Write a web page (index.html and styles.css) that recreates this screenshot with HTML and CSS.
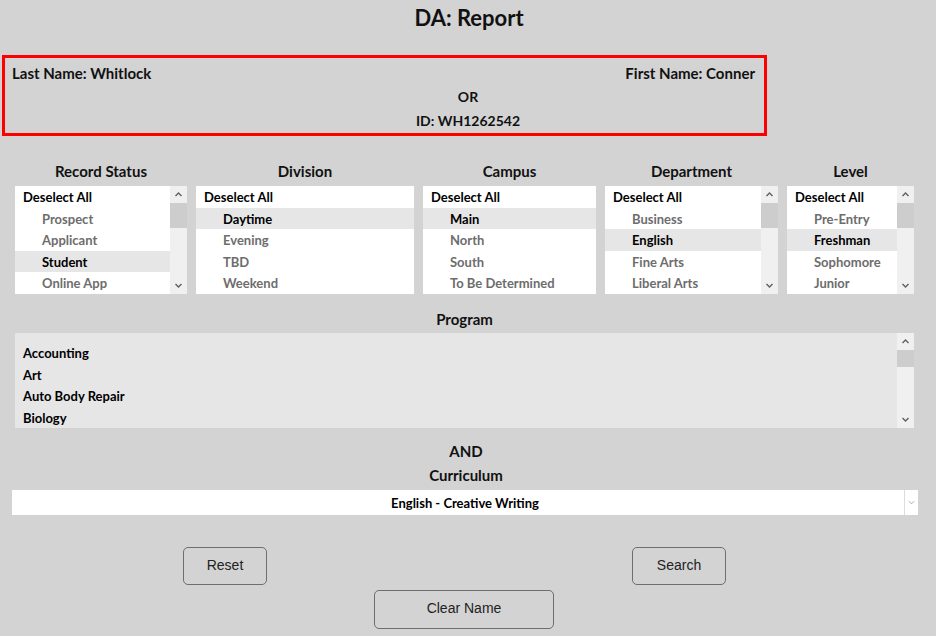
FILE: index.html
```html
<!DOCTYPE html>
<html lang="en">

<head>
    <meta charset="utf-8">
    <meta name="viewport" content="width=device-width, initial-scale=1.0">
    <title>DA: Report</title>
    <link rel="stylesheet" href="styles.css">
</head>

<body>

    <h1 class="title">DA: Report</h1>

    <section class="ident">
        <div class="names">
            <span>Last Name: Whitlock</span>
            <span>First Name: Conner</span>
        </div>
        <p class="mid">OR</p>
        <p class="mid">ID: WH1262542</p>
    </section>

    <section class="filters">
        <div class="col col_status">
            <h2>Record Status</h2>
            <div class="list">
                <ul>
                    <li class="head">Deselect All</li>
                    <li>Prospect</li>
                    <li>Applicant</li>
                    <li class="on">Student</li>
                    <li>Online App</li>
                </ul>
                <div class="bar">
                    <svg class="arr" viewBox="0 0 8 5"><polyline points="1,4 4,1 7,4" /></svg>
                    <div class="track"><div class="thumb"></div></div>
                    <svg class="arr" viewBox="0 0 8 5"><polyline points="1,1 4,4 7,1" /></svg>
                </div>
            </div>
        </div>

        <div class="col col_division">
            <h2>Division</h2>
            <div class="list">
                <ul>
                    <li class="head">Deselect All</li>
                    <li class="on">Daytime</li>
                    <li>Evening</li>
                    <li>TBD</li>
                    <li>Weekend</li>
                </ul>
            </div>
        </div>

        <div class="col col_campus">
            <h2>Campus</h2>
            <div class="list">
                <ul>
                    <li class="head">Deselect All</li>
                    <li class="on">Main</li>
                    <li>North</li>
                    <li>South</li>
                    <li>To Be Determined</li>
                </ul>
            </div>
        </div>

        <div class="col col_dept">
            <h2>Department</h2>
            <div class="list">
                <ul>
                    <li class="head">Deselect All</li>
                    <li>Business</li>
                    <li class="on">English</li>
                    <li>Fine Arts</li>
                    <li>Liberal Arts</li>
                </ul>
                <div class="bar">
                    <svg class="arr" viewBox="0 0 8 5"><polyline points="1,4 4,1 7,4" /></svg>
                    <div class="track"><div class="thumb"></div></div>
                    <svg class="arr" viewBox="0 0 8 5"><polyline points="1,1 4,4 7,1" /></svg>
                </div>
            </div>
        </div>

        <div class="col col_level">
            <h2>Level</h2>
            <div class="list">
                <ul>
                    <li class="head">Deselect All</li>
                    <li>Pre-Entry</li>
                    <li class="on">Freshman</li>
                    <li>Sophomore</li>
                    <li>Junior</li>
                </ul>
                <div class="bar">
                    <svg class="arr" viewBox="0 0 8 5"><polyline points="1,4 4,1 7,4" /></svg>
                    <div class="track"><div class="thumb"></div></div>
                    <svg class="arr" viewBox="0 0 8 5"><polyline points="1,1 4,4 7,1" /></svg>
                </div>
            </div>
        </div>
    </section>

    <section class="program">
        <h2>Program</h2>
        <div class="list list_prog">
            <ul>
                <li>Accounting</li>
                <li>Art</li>
                <li>Auto Body Repair</li>
                <li>Biology</li>
            </ul>
            <div class="bar">
                <svg class="arr" viewBox="0 0 8 5"><polyline points="1,4 4,1 7,4" /></svg>
                <div class="track"><div class="thumb thumb_prog"></div></div>
                <svg class="arr" viewBox="0 0 8 5"><polyline points="1,1 4,4 7,1" /></svg>
            </div>
        </div>
    </section>

    <p class="label">AND</p>
    <p class="label">Curriculum</p>

    <div class="select">
        <span class="select_text">English - Creative Writing</span>
        <span class="select_btn">
            <svg viewBox="0 0 8 5"><polyline points="1,1 4,4 7,1" /></svg>
        </span>
    </div>

    <div class="buttons">
        <button>Reset</button>
        <button class="search">Search</button>
    </div>
    <div class="buttons_clear">
        <button class="clear">Clear Name</button>
    </div>

</body></html>
```

FILE: styles.css
```css
* {
    box-sizing: border-box;
}

body {
    margin: 0;
    background-color: #d3d3d3;
    font-family: "Lato", "Noto Sans", sans-serif;
    color: #111;
}

h1, h2, p, ul {
    margin: 0;
    padding: 0;
}

.title {
    font-size: 22px;
    font-weight: 700;
    text-align: center;
    line-height: 24px;
    padding-top: 6px;
    padding-left: 2px;
}

.ident {
    width: 765px;
    margin: 25px 0 0 2px;
    border: 3px solid #ff0000;
    padding: 3px 9px 0 7px;
    font-size: 14px;
    font-weight: 700;
}

.names {
    display: flex;
    justify-content: space-between;
    line-height: 24px;
    font-size: 15px;
}

.mid {
    width: 926px;
    margin-left: -7px;
    text-align: center;
    line-height: 24px;
}

.filters {
    display: flex;
    gap: 9px;
    width: 899px;
    margin: 24px 0 0 15px;
}

h2 {
    font-size: 15px;
    font-weight: 700;
    text-align: center;
    line-height: 22px;
    margin-bottom: 4px;
}

.col_status { width: 172px; }
.col_division { width: 218px; }
.col_campus { width: 173px; }
.col_dept { width: 173px; }
.col_level { width: 127px; }

.list {
    display: flex;
    height: 108px;
    background-color: white;
}

.list ul {
    flex: 1;
    list-style: none;
}

.list li {
    height: 21.6px;
    line-height: 20.6px;
    padding-top: 1px;
    padding-left: 27px;
    font-size: 13px;
    font-weight: 700;
    color: #6d6d6d;
    white-space: nowrap;
}

.list li.head {
    padding-left: 8px;
    color: #000;
}

.list li.on {
    background-color: #e6e6e6;
    color: #000;
}

.bar {
    width: 17px;
    display: flex;
    flex-direction: column;
    background-color: #f0f0f0;
}

.arr {
    width: 17px;
    height: 17px;
    padding: 6px 4px;
    fill: none;
    stroke: #606060;
    stroke-width: 1.4;
}

.track {
    flex: 1;
}

.thumb {
    height: 25px;
    background-color: #cdcdcd;
}

.program {
    width: 899px;
    margin: 14px 0 0 15px;
}

.program h2 {
    margin-bottom: 3px;
}

.list_prog {
    height: 95px;
    background-color: #e6e6e6;
}

.list_prog ul {
    padding-top: 9px;
}

.list_prog li {
    padding-left: 8px;
    color: #000;
}

.thumb_prog {
    height: 17px;
}

.label {
    font-size: 15px;
    font-weight: 700;
    text-align: center;
    line-height: 24px;
    padding-right: 4px;
}

.program + .label {
    margin-top: 11px;
}

.select {
    display: flex;
    width: 906px;
    height: 25px;
    margin: 3px 0 0 12px;
    background-color: white;
    font-size: 13px;
    font-weight: 700;
}

.select_text {
    flex: 1;
    text-align: center;
    line-height: 26px;
    padding-left: 14px;
    color: #000;
}

.select_btn {
    width: 14px;
    border-left: 1px solid #dcdcdc;
    display: flex;
    align-items: center;
    justify-content: center;
}

.select_btn svg {
    width: 7px;
    height: 5px;
    fill: none;
    stroke: #a0a0a0;
    stroke-width: 1;
}

.buttons {
    display: flex;
    justify-content: center;
    gap: 365px;
    margin-top: 32px;
    padding-right: 27px;
}

button {
    font-family: "Liberation Sans", Arial, sans-serif;
    font-size: 14px;
    color: #222;
    background-color: #d3d3d3;
    border: 1px solid #6e6e6e;
    border-radius: 5px;
    width: 84px;
    height: 38px;
    padding: 0 0 2px;
}

.search {
    width: 94px;
}

.buttons_clear {
    display: flex;
    justify-content: center;
    margin-top: 5px;
    padding-right: 8px;
}

.clear {
    width: 180px;
    height: 39px;
    padding-bottom: 4px;
}
```
